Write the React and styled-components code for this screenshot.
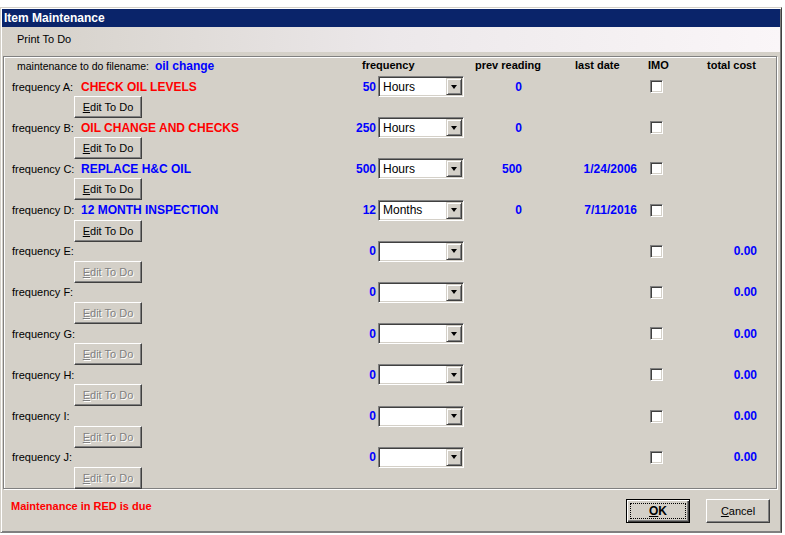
import React from "react";
import styled, { createGlobalStyle, css } from "styled-components";

const GlobalStyle = createGlobalStyle`
  html, body {
    margin: 0;
    padding: 0;
    background: #ffffff;
  }
  body {
    font-family: "Liberation Sans", Arial, sans-serif;
    font-size: 11px;
    color: #000;
  }
`;

const Window = styled.div`
  margin-top: 7px;
  width: 782px;
  height: 526px;
  box-sizing: border-box;
  background: #d4d0c8;
  border-left: 1px solid #d4d0c8;
  border-top: 1px solid #d4d0c8;
  border-right: 1px solid #404040;
  border-bottom: 1px solid #808080;
  box-shadow: inset 1px 1px 0 #ffffff, inset -1px -1px 0 #808080;
  display: flex;
  flex-direction: column;
  padding: 1px;
`;

const TitleBar = styled.div`
  height: 18px;
  background: #0a246a;
  color: #ffffff;
  font-weight: bold;
  font-size: 12px;
  display: flex;
  align-items: center;
  padding-left: 2px;
`;

const MenuBar = styled.div`
  height: 25px;
  background: linear-gradient(to right, #d4d0c8 0%, #ece8ea 50%, #faf6f8 100%);
  display: flex;
  align-items: center;
  padding-left: 15px;
  padding-bottom: 2px;
  box-sizing: border-box;
  font-size: 11px;
`;

const Content = styled.div`
  flex: 1;
  display: flex;
  flex-direction: column;
  padding: 4px 3px 0 1px;
`;

const GroupBox = styled.div`
  border: 1px solid #808080;
  box-shadow: inset 1px 1px 0 #ffffff, 1px 1px 0 #ffffff;
  height: 433px;
  box-sizing: border-box;
  padding: 0 0 0 8px;
`;

const HeaderRow = styled.div`
  display: grid;
  grid-template-columns: 350px 113px 100px 73px 59px 1fr;
  height: 19px;
  box-sizing: border-box;
  padding-top: 2px;
  align-items: start;
  font-weight: bold;
  font-size: 11px;
`;

const FileCell = styled.div`
  padding-left: 5px;
  font-weight: normal;
  font-size: 10.5px;
  display: flex;
  gap: 6px;
  align-items: center;
`;

const BlueBold = styled.span`
  color: ${p => (p.$red ? "#ff0000" : "#0000ff")};
  font-weight: bold;
  font-size: 12px;
`;

const ItemRow = styled.div`
  height: 41.2px;
  display: grid;
  grid-template-columns: 69px 265px 30px 2px 86px 58px 115px 43px 77px;
  grid-template-rows: 21px 20px;
  align-items: center;
`;

const Label = styled.div`
  font-size: 11px;
  white-space: nowrap;
`;

const Right = styled.div`
  text-align: right;
  color: #0000ff;
  font-weight: bold;
  font-size: 12px;
`;

const SelectBox = styled.div`
  grid-column: 5;
  height: 21px;
  box-sizing: border-box;
  background: #ffffff;
  border-top: 1px solid #808080;
  border-left: 1px solid #808080;
  border-right: 1px solid #ffffff;
  border-bottom: 1px solid #ffffff;
  box-shadow: inset 1px 1px 0 #404040, inset -1px -1px 0 #d4d0c8;
  display: flex;
  align-items: center;
  padding: 1px 1px 1px 2px;
`;

const SelectText = styled.div`
  flex: 1;
  padding-left: 2px;
  font-size: 12px;
`;

const DropButton = styled.div`
  width: 16px;
  height: 17px;
  box-sizing: border-box;
  background: #d4d0c8;
  border-top: 1px solid #d4d0c8;
  border-left: 1px solid #d4d0c8;
  border-right: 1px solid #404040;
  border-bottom: 1px solid #404040;
  box-shadow: inset 1px 1px 0 #ffffff, inset -1px -1px 0 #808080;
  display: flex;
  align-items: center;
  justify-content: center;
  &::after {
    content: "";
    border-left: 3.5px solid transparent;
    border-right: 3.5px solid transparent;
    border-top: 4px solid #000;
  }
`;

const CheckCell = styled.div`
  padding-left: 13px;
  display: flex;
  align-items: center;
`;

const CheckBox = styled.div`
  width: 13px;
  height: 13px;
  box-sizing: border-box;
  background: #ffffff;
  border-top: 1px solid #808080;
  border-left: 1px solid #808080;
  border-right: 1px solid #ffffff;
  border-bottom: 1px solid #ffffff;
  box-shadow: inset 1px 1px 0 #404040, inset -1px -1px 0 #d4d0c8;
`;

const raised = css`
  box-sizing: border-box;
  background: #d4d0c8;
  border-top: 1px solid #ffffff;
  border-left: 1px solid #ffffff;
  border-right: 1px solid #404040;
  border-bottom: 1px solid #404040;
  box-shadow: inset -1px -1px 0 #808080;
  font-family: "Liberation Sans", Arial, sans-serif;
  font-size: 11px;
  display: flex;
  align-items: center;
  justify-content: center;
  padding: 0;
`;

const EditButton = styled.button`
  ${raised};
  grid-column: 2;
  grid-row: 2;
  margin-left: -7px;
  width: 68px;
  height: 22px;
  align-self: start;
  margin-top: -1px;
  color: ${p => (p.disabled ? "#808080" : "#000")};
  text-shadow: ${p => (p.disabled ? "1px 1px 0 #ffffff" : "none")};
`;

const Footer = styled.div`
  flex: 1;
  display: flex;
  align-items: flex-start;
  padding: 10px 7px 0 8px;
`;

const DueNote = styled.div`
  flex: 1;
  color: #ff0000;
  font-weight: bold;
  font-size: 11px;
  padding-top: 1px;
`;

const DialogButton = styled.button`
  ${raised};
  width: 64px;
  height: 24px;
  margin-left: ${p => (p.$gap ? "16px" : "0")};
  font-weight: ${p => (p.$default ? "bold" : "normal")};
  font-size: ${p => (p.$default ? "12px" : "11px")};
  ${p =>
    p.$default &&
    css`
      border: 1px solid #000;
      box-shadow: inset 1px 1px 0 #ffffff, inset -1px -1px 0 #404040, inset -2px -2px 0 #808080;
      position: relative;
      &::before {
        content: "";
        position: absolute;
        inset: 3px;
        border: 1px dotted #000;
      }
    `}
`;

const U = styled.span`
  text-decoration: underline;
`;

const items = [
  { key: "A", desc: "CHECK OIL LEVELS", red: true, freq: "50", unit: "Hours", prev: "0", date: "" },
  { key: "B", desc: "OIL CHANGE AND CHECKS", red: true, freq: "250", unit: "Hours", prev: "0", date: "" },
  { key: "C", desc: "REPLACE H&C OIL", freq: "500", unit: "Hours", prev: "500", date: "1/24/2006" },
  { key: "D", desc: "12 MONTH INSPECTION", freq: "12", unit: "Months", prev: "0", date: "7/11/2016" },
  { key: "E", freq: "0", cost: "0.00" },
  { key: "F", freq: "0", cost: "0.00" },
  { key: "G", freq: "0", cost: "0.00" },
  { key: "H", freq: "0", cost: "0.00" },
  { key: "I", freq: "0", cost: "0.00" },
  { key: "J", freq: "0", cost: "0.00" },
];

export default function App() {
  return (
    <>
      <GlobalStyle />
      <Window>
        <TitleBar>Item Maintenance</TitleBar>
        <MenuBar>Print To Do</MenuBar>
        <Content>
          <GroupBox>
            <HeaderRow>
              <FileCell>
                maintenance to do filename: <BlueBold>oil change</BlueBold>
              </FileCell>
              <div>frequency</div>
              <div>prev reading</div>
              <div>last date</div>
              <div>IMO</div>
              <div>total cost</div>
            </HeaderRow>
            {items.map(it => (
              <ItemRow key={it.key}>
                <Label>frequency {it.key}:</Label>
                <div>{it.desc && <BlueBold $red={it.red}>{it.desc}</BlueBold>}</div>
                <Right>{it.freq}</Right>
                <SelectBox>
                  <SelectText>{it.unit}</SelectText>
                  <DropButton />
                </SelectBox>
                <Right>{it.prev}</Right>
                <Right>{it.date}</Right>
                <CheckCell>
                  <CheckBox />
                </CheckCell>
                <Right>{it.cost}</Right>
                <EditButton disabled={!it.desc}>
                  <U>E</U>dit To Do
                </EditButton>
              </ItemRow>
            ))}
          </GroupBox>
          <Footer>
            <DueNote>Maintenance in RED is due</DueNote>
            <DialogButton $default>
              <U>O</U>K
            </DialogButton>
            <DialogButton $gap>
              <U>C</U>ancel
            </DialogButton>
          </Footer>
        </Content>
      </Window>
    </>
  );
}
